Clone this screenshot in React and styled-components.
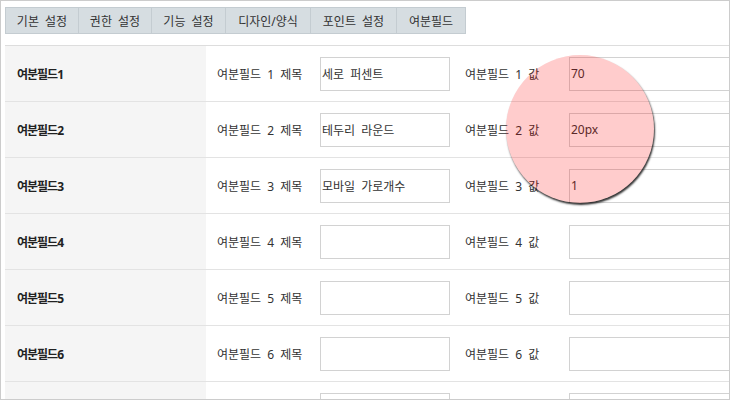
import React from "react";
import styled, { createGlobalStyle } from "styled-components";

const GlobalStyle = createGlobalStyle`
  body {
    margin: 0;
    background: #fff;
    font-family: "Noto Sans", "Noto Sans CJK KR", sans-serif;
  }
`;

const Frame = styled.div`
  position: relative;
  width: 730px;
  height: 400px;
  box-sizing: border-box;
  border: 1px solid #cccccc;
  overflow: hidden;
  padding: 6px 0 0 4px;
`;

const Tabs = styled.div`
  display: flex;
  width: max-content;
  border: 1px solid #c4ccd1;
  background: #d6dde1;
`;

const Tab = styled.div`
  box-sizing: border-box;
  width: ${(p) => p.$w}px;
  height: 25px;
  display: flex;
  align-items: center;
  justify-content: center;
  font-size: 12px;
  word-spacing: 3px;
  color: #333;
  border-left: ${(p) => (p.$first ? "none" : "1px solid #c4ccd1")};
  white-space: nowrap;
`;

const Table = styled.div`
  margin-top: 11px;
  width: 900px;
  border-top: 1px solid #dddddd;
`;

const Row = styled.div`
  display: grid;
  grid-template-columns: 201px 103px 145px 104px 1fr;
  height: 55px;
  border-bottom: 1px solid #e3e3e3;
  font-size: 12px;
  color: #333;
`;

const Cell = styled.div`
  display: flex;
  align-items: center;
  padding: 0 ${(p) => (p.$head ? 12 : 11)}px;
  background: ${(p) => (p.$head ? "#f5f5f5" : "#fff")};
  font-weight: ${(p) => (p.$head ? 700 : 400)};
  letter-spacing: ${(p) => (p.$head ? "-1px" : "0")};
  word-spacing: 3px;
  color: ${(p) => (p.$head ? "#222" : "#333")};
  white-space: nowrap;
`;

const Input = styled.input`
  box-sizing: border-box;
  width: ${(p) => p.$w || 130}px;
  height: 34px;
  border: 1px solid #d2d2d2;
  padding: 0 1px;
  font-family: inherit;
  font-size: 12px;
  word-spacing: 3px;
  color: #333;
  outline: none;
  background: transparent;
`;

const Spot = styled.div`
  position: absolute;
  left: 505px;
  top: 54px;
  width: 148px;
  height: 148px;
  border-radius: 50%;
  background: rgba(255, 0, 0, 0.2);
  box-shadow: 1px 2px 2px rgba(0, 0, 0, 0.8);
  pointer-events: none;
`;

const tabs = [
  ["기본 설정", 72],
  ["권한 설정", 73],
  ["기능 설정", 74],
  ["디자인/양식", 85],
  ["포인트 설정", 86],
  ["여분필드", 69],
];

const rows = [
  ["세로 퍼센트", "70"],
  ["테두리 라운드", "20px"],
  ["모바일 가로개수", "1"],
  ["", ""],
  ["", ""],
  ["", ""],
  ["", ""],
];

export default function App() {
  return (
    <>
      <GlobalStyle />
      <Frame>
        <Tabs>
          {tabs.map(([t, w], i) => (
            <Tab key={t} $w={w} $first={i === 0}>
              {t}
            </Tab>
          ))}
        </Tabs>
        <Table>
          {rows.map(([title, value], i) => (
            <Row key={i}>
              <Cell $head>여분필드{i + 1}</Cell>
              <Cell>여분필드 {i + 1} 제목</Cell>
              <Cell>
                <Input defaultValue={title} />
              </Cell>
              <Cell>여분필드 {i + 1} 값</Cell>
              <Cell>
                <Input $w={300} defaultValue={value} />
              </Cell>
            </Row>
          ))}
        </Table>
        <Spot />
      </Frame>
    </>
  );
}
